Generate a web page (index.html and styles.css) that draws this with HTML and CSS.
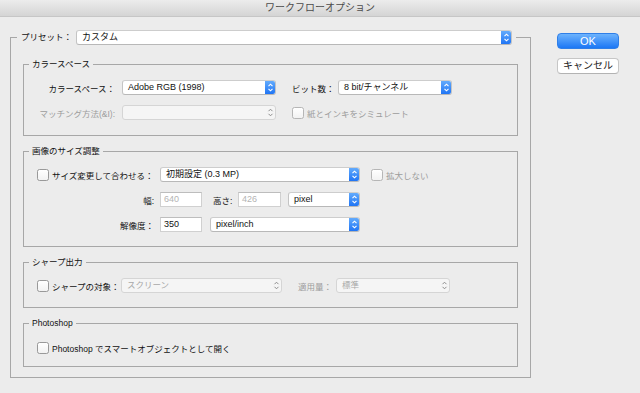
FILE: index.html
```html
<!DOCTYPE html>
<html lang="ja">
<head>
<meta charset="utf-8">
<title>ワークフローオプション</title>
<link rel="stylesheet" href="styles.css">
</head>
<body>
<div class="titlebar">ワークフローオプション</div>
<div class="main">
  <fieldset class="outer">
    <legend class="outer-legend">
      <div class="legend-row">
        <span class="preset-label">プリセット：</span>
        <div class="select w436"><span class="val">カスタム</span><svg class="step" viewBox="0 0 11 15"><path d="M3.5 6.2L5.5 4.2L7.5 6.2M3.5 8.8L5.5 10.8L7.5 8.8" fill="none" stroke="#fff" stroke-width="1.1"/></svg></div>
      </div>
    </legend>

    <fieldset class="group first">
      <legend>カラースペース</legend>
      <div class="grid-color">
        <div class="rlabel">カラースペース：</div>
        <div class="select"><span class="val">Adobe RGB (1998)</span><svg class="step" viewBox="0 0 11 15"><path d="M3.5 6.2L5.5 4.2L7.5 6.2M3.5 8.8L5.5 10.8L7.5 8.8" fill="none" stroke="#fff" stroke-width="1.1"/></svg></div>
        <div class="cell3">
          <span class="bit-label">ビット数：</span>
          <div class="select w114"><span class="val">8 bit/チャンネル</span><svg class="step" viewBox="0 0 11 15"><path d="M3.5 6.2L5.5 4.2L7.5 6.2M3.5 8.8L5.5 10.8L7.5 8.8" fill="none" stroke="#fff" stroke-width="1.1"/></svg></div>
        </div>
        <div class="rlabel dis">マッチング方法(&amp;I):</div>
        <div class="select disabled"><span class="val"></span><svg class="step" viewBox="0 0 11 15"><path d="M3.5 6.2L5.5 4.2L7.5 6.2M3.5 8.8L5.5 10.8L7.5 8.8" fill="none" stroke="#8c8c8c" stroke-width="1"/></svg></div>
        <div class="cell3">
          <span class="cb dis-cb"></span><span class="dis cb-label">紙とインキをシミュレート</span>
        </div>
      </div>
    </fieldset>

    <fieldset class="group">
      <legend>画像のサイズ調整</legend>
      <div class="grid-size">
        <div class="lcell"><span class="cb"></span><span class="cb-label">サイズ変更して合わせる：</span></div>
        <div class="select"><span class="val">初期設定 (0.3 MP)</span><svg class="step" viewBox="0 0 11 15"><path d="M3.5 6.2L5.5 4.2L7.5 6.2M3.5 8.8L5.5 10.8L7.5 8.8" fill="none" stroke="#fff" stroke-width="1.1"/></svg></div>
        <div class="cell3b"><span class="cb dis-cb"></span><span class="dis cb-label">拡大しない</span></div>

        <div class="rlabel">幅:</div>
        <div class="row2">
          <div class="inp dis-text">640</div>
          <span class="h-label">高さ:</span>
          <div class="inp w43 dis-text">426</div>
          <div class="select w72"><span class="val">pixel</span><svg class="step" viewBox="0 0 11 15"><path d="M3.5 6.2L5.5 4.2L7.5 6.2M3.5 8.8L5.5 10.8L7.5 8.8" fill="none" stroke="#fff" stroke-width="1.1"/></svg></div>
        </div>
        <div></div>

        <div class="rlabel">解像度：</div>
        <div class="row2">
          <div class="inp">350</div>
          <div class="select w150"><span class="val">pixel/inch</span><svg class="step" viewBox="0 0 11 15"><path d="M3.5 6.2L5.5 4.2L7.5 6.2M3.5 8.8L5.5 10.8L7.5 8.8" fill="none" stroke="#fff" stroke-width="1.1"/></svg></div>
        </div>
        <div></div>
      </div>
    </fieldset>

    <fieldset class="group">
      <legend>シャープ出力</legend>
      <div class="row-sharp">
        <span class="cb"></span><span class="cb-label sharp-label">シャープの対象：</span>
        <div class="select disabled w161"><span class="val">スクリーン</span><svg class="step" viewBox="0 0 11 15"><path d="M3.5 6.2L5.5 4.2L7.5 6.2M3.5 8.8L5.5 10.8L7.5 8.8" fill="none" stroke="#8c8c8c" stroke-width="1"/></svg></div>
        <span class="dis amount-label">適用量：</span>
        <div class="select disabled w114"><span class="val">標準</span><svg class="step" viewBox="0 0 11 15"><path d="M3.5 6.2L5.5 4.2L7.5 6.2M3.5 8.8L5.5 10.8L7.5 8.8" fill="none" stroke="#8c8c8c" stroke-width="1"/></svg></div>
      </div>
    </fieldset>

    <fieldset class="group ps">
      <legend>Photoshop</legend>
      <div class="row-ps">
        <span class="cb"></span><span class="cb-label">Photoshop でスマートオブジェクトとして開く</span>
      </div>
    </fieldset>
  </fieldset>

  <div class="buttons">
    <div class="btn ok">OK</div>
    <div class="btn cancel">キャンセル</div>
  </div>
</div>
</body>
</html>
```

FILE: styles.css
```css
html, body {
  margin: 0;
  padding: 0;
}
body {
  width: 640px;
  height: 393px;
  overflow: hidden;
  background: #ececec;
  font-family: "Liberation Sans", "Noto Sans CJK JP", sans-serif;
  font-size: 8.5px;
  color: #111;
}

.titlebar {
  height: 17px;
  box-sizing: border-box;
  background: linear-gradient(#ececec, #d4d4d4);
  border-bottom: 1px solid #c6c6c6;
  text-align: center;
  font-size: 10px;
  line-height: 16px;
  color: #4b4b4b;
}

.main {
  display: flex;
  align-items: flex-start;
}

fieldset {
  margin: 0;
  min-width: 0;
  box-sizing: border-box;
  border: 1px solid #a7a7a7;
}

.outer {
  margin: 13px 0 0 10px;
  width: 521px;
  padding: 13px 0 10px;
}

.outer-legend {
  margin-left: 6px;
  padding: 0 4px;
}
.legend-row {
  display: flex;
  align-items: center;
  height: 15px;
}
.preset-label {
  width: 55px;
  line-height: 15px;
  white-space: nowrap;
}

.group {
  margin: 9px 12px 0;
  padding: 10px 0 14px;
}
.group.first {
  margin-top: 0;
  padding-bottom: 15px;
}
.group.ps {
  padding: 11px 0 11px;
}
.group legend {
  margin-left: 5px;
  padding: 0 3px;
  line-height: 12px;
}

/* selects */
.select {
  box-sizing: border-box;
  height: 15px;
  display: flex;
  align-items: center;
  background: #fff;
  border: 1px solid #c4c4c4;
  border-top-color: #cdcdcd;
  border-bottom-color: #b8b8b8;
  border-radius: 3px;
  padding-left: 5px;
  overflow: hidden;
}
.select .val {
  flex: 1;
  white-space: nowrap;
  font-size: 9px;
  line-height: 13px;
}
.select .step {
  flex: none;
  width: 11px;
  height: 15px;
  margin: -1px -1px -1px 0;
  background: linear-gradient(#68affd, #1b71f4);
  border-radius: 0 3px 3px 0;
  display: block;
}
.select.disabled {
  background: #f5f5f5;
  border-color: #d5d5d5;
}
.select.disabled .val {
  color: #a8a8a8;
  font-size: 8.5px;
}
.select.disabled .step {
  background: none;
}
.w436 { width: 436px; }
.w114 { width: 114px; }
.w72 { width: 72px; }
.w150 { width: 150px; }
.w161 { width: 161px; }

/* checkbox */
.cb {
  flex: none;
  width: 12px;
  height: 12px;
  box-sizing: border-box;
  border: 1px solid #999;
  border-radius: 2.5px;
  background: linear-gradient(#fff, #f2f2f2);
}
.dis-cb {
  border-color: #b6b6b6;
}
.cb-label {
  margin-left: 3px;
  white-space: nowrap;
}
.dis {
  color: #9c9c9c;
}

/* inputs */
.inp {
  flex: none;
  box-sizing: border-box;
  width: 42px;
  height: 15px;
  background: #fff;
  border: 1px solid #d0d0d0;
  border-top-color: #bdbdbd;
  padding-left: 3px;
  font-size: 9px;
  line-height: 13px;
}
.inp.w43 { width: 43px; }
.dis-text { color: #b4b4b4; }

/* color space grid */
.grid-color {
  display: grid;
  grid-template-columns: 94px 154px auto;
  grid-auto-rows: 15px;
  column-gap: 4px;
  row-gap: 10px;
  align-items: center;
}
.rlabel {
  text-align: right;
  padding-right: 3px;
  white-space: nowrap;
}
.cell3 {
  display: flex;
  align-items: center;
  padding-left: 12px;
}
.bit-label {
  width: 46px;
  white-space: nowrap;
}

/* image size grid */
.grid-size {
  display: grid;
  grid-template-columns: 132px 200px auto;
  grid-auto-rows: 15px;
  column-gap: 4px;
  row-gap: 10px;
  align-items: center;
}
.grid-size .rlabel {
  padding-right: 2px;
}
.lcell {
  display: flex;
  align-items: center;
  padding-left: 13px;
}
.cell3b {
  display: flex;
  align-items: center;
  padding-left: 7px;
}
.row2 {
  display: flex;
  align-items: center;
}
.h-label {
  margin-left: 11px;
  width: 25px;
  white-space: nowrap;
}
.row2 .w72 { margin-left: 7px; }
.row2 .w150 { margin-left: 8px; }

/* sharp row */
.row-sharp {
  display: flex;
  align-items: center;
  height: 15px;
  padding-left: 13px;
}
.sharp-label {
  width: 69px;
}
.amount-label {
  margin-left: 16px;
  width: 38px;
  white-space: nowrap;
}

/* photoshop row */
.row-ps {
  display: flex;
  align-items: center;
  height: 15px;
  padding-left: 13px;
}

/* buttons */
.buttons {
  margin: 16px 0 0 26px;
  display: flex;
  flex-direction: column;
  gap: 9px;
}
.btn {
  width: 62px;
  height: 16px;
  box-sizing: border-box;
  border-radius: 4px;
  text-align: center;
  white-space: nowrap;
}
.ok {
  background: linear-gradient(#6db3fd, #1c77f5);
  border: 1px solid #2f7fe8;
  color: #fff;
  font-size: 11px;
  line-height: 14px;
}
.cancel {
  background: #fff;
  border: 1px solid #c6c6c6;
  border-bottom-color: #b3b3b3;
  font-size: 10px;
  line-height: 14px;
  color: #1a1a1a;
}
```
